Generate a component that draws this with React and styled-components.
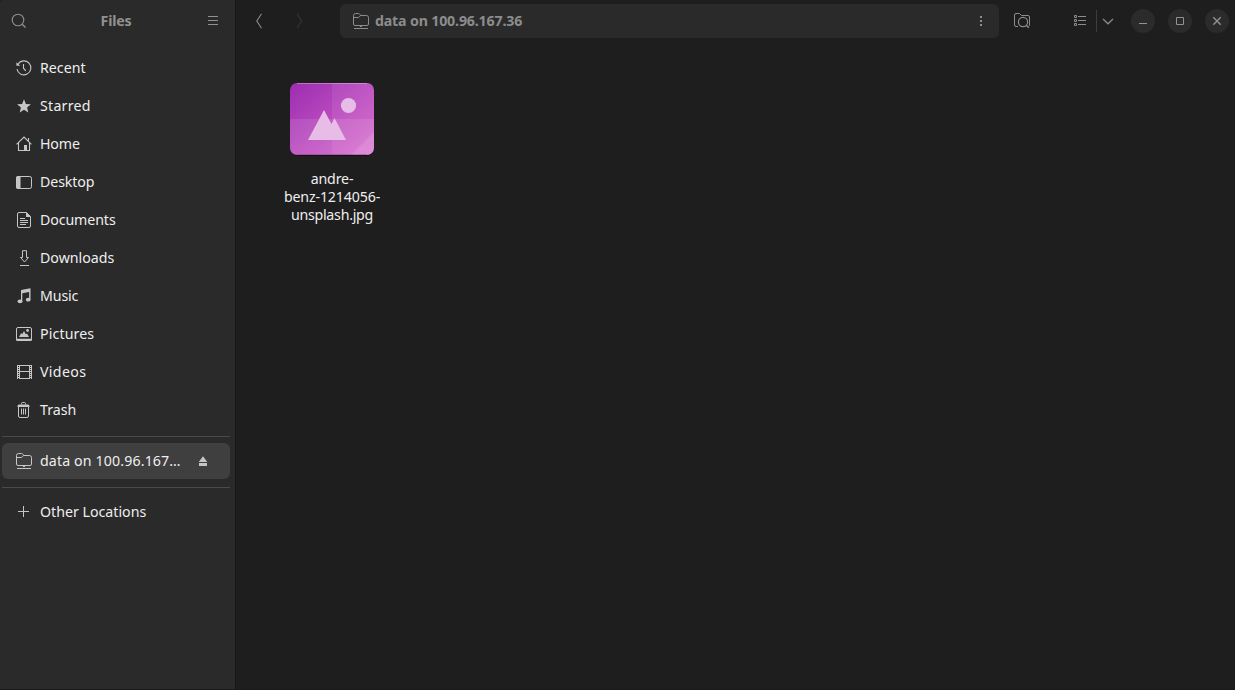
import React from "react";
import styled, { createGlobalStyle } from "styled-components";

const Global = createGlobalStyle`
  * { box-sizing: border-box; }
  body { margin: 0; background: #1e1e1e; overflow: hidden; }
`;

const Window = styled.div`
  display: flex;
  width: 1235px;
  height: 690px;
  background: #1e1e1e;
  border-bottom: 1px solid #1f181a;
  border-top-left-radius: 3px;
  font-family: "Noto Sans", "Open Sans", sans-serif;
  font-size: 14.2px;
  line-height: 18px;
  color: #eeeeee;
`;

const Sidebar = styled.aside`
  width: 236px;
  flex: none;
  background: #2a2a2a;
  border-right: 1px solid #191919;
  border-top-left-radius: 3px;
`;

const SidebarHeader = styled.header`
  display: flex;
  align-items: center;
  justify-content: space-between;
  height: 42px;
  padding: 0 14px 0 11px;
  color: #919191;
`;

const Title = styled.h1`
  margin: 0;
  font-size: 14.2px;
  font-weight: 700;
  line-height: 18px;
  letter-spacing: ${(p) => p.$spacing || 0}px;
  white-space: nowrap;
`;

const Places = styled.nav`
  display: flex;
  flex-direction: column;
  gap: 2px;
  padding: 8px 5px 0 2px;
`;

const PlaceRow = styled.div`
  display: flex;
  align-items: center;
  gap: 8px;
  height: 36px;
  padding: 0 19px 0 14px;
  border-radius: 6px;
  background: ${(p) => (p.$active ? "#3f3f3f" : "transparent")};
`;

const Label = styled.span`
  flex: 1;
  white-space: nowrap;
  letter-spacing: ${(p) => p.$spacing}px;
`;

const Divider = styled.hr`
  width: 100%;
  height: 1px;
  margin: ${(p) => p.$margin};
  border: 0;
  background: #4b4b4b;
`;

const Glyph = styled.svg`
  display: block;
  flex: none;
  color: ${(p) => p.$color || "inherit"};
  overflow: visible;
`;

const Main = styled.main`
  flex: 1;
  min-width: 0;
`;

const Toolbar = styled.header`
  display: flex;
  align-items: center;
  height: 42px;
  padding: 0 6px 0 14px;
  color: #8c8c8c;
`;

const NavButtons = styled.div`
  display: flex;
  gap: 24px;
  width: 90px;
`;

const PathBar = styled.div`
  display: flex;
  align-items: center;
  gap: 6px;
  width: 659px;
  height: 34px;
  padding: 0 10px 0 13px;
  border-radius: 6px;
  background: #2a2a2a;
`;

const PathText = styled.span`
  flex: 1;
  font-weight: 700;
  letter-spacing: ${(p) => p.$spacing}px;
`;

const SearchSlot = styled.div`
  margin-left: 15px;
`;

const ViewSwitch = styled.div`
  display: flex;
  align-items: center;
  margin-left: 42px;
`;

const Separator = styled.span`
  width: 1px;
  height: 22px;
  margin: 0 3px 0 8px;
  background: #3d3d3d;
`;

const WindowControls = styled.div`
  display: flex;
  gap: 13px;
  margin-left: auto;
`;

const ControlButton = styled.button`
  display: grid;
  place-items: center;
  width: 24px;
  height: 24px;
  padding: 0;
  border: 0;
  border-radius: 50%;
  background: #2b2b2b;
  color: #919191;
`;

const Canvas = styled.section`
  padding: 41px 0 0 32px;
`;

const FileItem = styled.figure`
  display: flex;
  flex-direction: column;
  align-items: center;
  width: 128px;
  margin: 0;
`;

const FileName = styled.figcaption`
  display: flex;
  flex-direction: column;
  align-items: center;
  margin-top: 15px;
`;

const NameLine = styled.span`
  letter-spacing: ${(p) => p.$spacing}px;
  white-space: nowrap;
`;

const Icon = ({ size = 16, color, children }) => (
  <Glyph width={size} height={size} viewBox={`0 0 ${size} ${size}`} fill="none" stroke="currentColor" strokeWidth="1" $color={color}>
    {children}
  </Glyph>
);

const solid = { fill: "currentColor", stroke: "none" };

const NetworkFolder = () => (
  <>
    <path d="M.5 11V2.5Q.5.5 2.5.5h3q1 0 1.5 1l.5 1h6q2 0 2 2V11q0 1.5-1.5 1.5H2Q.5 12.5.5 11zM.5 4.5h4.7q.8 0 1.2-.7l1-1.3" />
    <path d="M1 15.5h14M7 13.5h2" />
  </>
);

const icons = {
  recent: (
    <>
      <path d="M1.9 4.2A7 7 0 1 1 1 9.2M7.5 4v4.2l2.3 2.6" strokeWidth="1.1" />
      <path d="M.4 2.2v3.6h3.8z" {...solid} />
    </>
  ),
  star: <path d="m8 1.3 1.9 4.6 5 .4-3.8 3.2 1.2 4.9L8 11.8l-4.3 2.6 1.2-4.9L1.1 6.3l5-.4z" {...solid} />,
  home: (
    <>
      <path d="M.6 8.4 8 1l7.4 7.4M2.5 7v7.5h11V7M12.5 2v3" strokeWidth="1.1" />
      <path d="M8 9h3v5H8z" {...solid} />
    </>
  ),
  desktop: (
    <>
      <rect x=".5" y="2.5" width="15" height="12" rx="1.7" />
      <path d="M2 2h2.5v13H2Q0 15 0 13V4q0-2 2-2z" {...solid} />
    </>
  ),
  documents: (
    <>
      <path d="M3 .5h7.5l4 4V14q0 1.5-1.5 1.5H3Q1.5 15.5 1.5 14V2Q1.5.5 3 .5z" />
      <path d="M10 0v5h5z" {...solid} />
      <path d="M4 6.5h5M4 8.5h8M4 10.5h8M4 12.5h6" />
    </>
  ),
  downloads: <path d="M6.5.7h4v6.8h2L8.5 12l-4-4.5h2zM4 15.5h9" />,
  music: (
    <>
      <path d="M5 2.1 14.5.3v11.2h-1.4V4L6.3 5.2v8.3H5z" {...solid} />
      <ellipse cx="4" cy="13.3" rx="2.4" ry="1.9" {...solid} />
      <ellipse cx="12.2" cy="11.7" rx="2.4" ry="1.9" {...solid} />
    </>
  ),
  pictures: (
    <>
      <rect x=".5" y="1.5" width="15" height="13" rx="1.5" />
      <path d="M0 12.7h16v.8q0 1.5-1.5 1.5h-13Q0 15 0 13.5zM3 11l2.2-4 1 1.3L8 5l1.8 3.3L11 7.5l2 3.5z" {...solid} />
      <circle cx="11.6" cy="4.5" r="1.4" {...solid} />
    </>
  ),
  videos: (
    <>
      <path d="M1.5 1v14M15.5 1v14" />
      <path d="M2.5 1v14M14.5 1v14" strokeDasharray="1 1" />
      <path d="M3.5 1v14M13.5 1v14M3 1.5h11M4 7.5h9M3 14.5h11" />
    </>
  ),
  trash: (
    <>
      <path d="M1.5 5V4Q1.5 2.5 3 2.5h9q1.5 0 1.5 1.5v1z" {...solid} />
      <path d="M5.5 2.5v-1q0-1 1-1h2q1 0 1 1v1" />
      <path d="M2.5 5v9q0 1.5 1.5 1.5h7q1.5 0 1.5-1.5V5M5.5 6.5v6M7.5 6.5v6M9.5 6.5v6" />
    </>
  ),
  network: <NetworkFolder />,
  plus: <path d="M2 7.5h11M7.5 2v11" />,
};

const places = [
  ["recent", "Recent", 0],
  ["star", "Starred", 0.25],
  ["home", "Home", -0.15],
  ["desktop", "Desktop", -0.1],
  ["documents", "Documents", -0.1],
  ["downloads", "Downloads", 0],
  ["music", "Music", -0.12],
  ["pictures", "Pictures", 0.12],
  ["videos", "Videos", 0.35],
  ["trash", "Trash", 0],
];

const Place = ({ icon, label, spacing, active, children }) => (
  <PlaceRow $active={active}>
    <Icon color="#c6c6c6">{icons[icon]}</Icon>
    <Label $spacing={spacing}>{label}</Label>
    {children}
  </PlaceRow>
);

const ImageThumbnail = () => (
  <Glyph width="84" height="72" viewBox="0 0 84 72">
    <defs>
      <linearGradient id="thumb" x1="0" y1="0" x2="1" y2="1">
        <stop offset="0" stopColor="#9c2db1" />
        <stop offset="1" stopColor="#d868cc" />
      </linearGradient>
      <clipPath id="card">
        <rect width="84" height="72" rx="7" />
      </clipPath>
    </defs>
    <rect y="1" width="84" height="72" rx="7" fill="#111" />
    <g clipPath="url(#card)">
      <rect width="84" height="72" fill="url(#thumb)" />
      <path d="M42 0h42v72H42z" fill="#fff" opacity=".07" />
      <path d="M0 36h84v36H0z" fill="#fff" opacity=".1" />
      <path d="M84 49v23H61z" fill="#fff" opacity=".11" />
      <path d="M7 .5h70" stroke="#fff" opacity=".3" />
      <path d="M7 71.5h70" stroke="#7e2f84" opacity=".4" />
    </g>
    <path d="M18 57 34 27l7.5 14 3-6L56 57z" fill="#e7bce6" />
    <circle cx="58.5" cy="22.5" r="7.6" fill="#e7bce6" />
  </Glyph>
);

export default function App() {
  return (
    <>
      <Global />
      <Window>
        <Sidebar>
          <SidebarHeader>
            <Icon>
              <circle cx="7" cy="7" r="5.8" strokeWidth="1.1" />
              <path d="m11.2 11.2 3.3 3.3" strokeWidth="1.3" />
            </Icon>
            <Title $spacing={-0.2}>Files</Title>
            <Icon><path d="M3 3.5h10M3 7.5h10M3 11.5h10" /></Icon>
          </SidebarHeader>
          <Places>
            {places.map(([icon, label, spacing]) => (
              <Place key={icon} icon={icon} label={label} spacing={spacing} />
            ))}
            <Divider $margin="6px 0 4px" />
            <Place icon="network" label="data on 100.96.167…" spacing={0.13} active>
              <Icon color="#c6c6c6">
                <path d="m8 3.2 4.3 5.8H3.7zM4 10h8v3H4z" {...solid} />
              </Icon>
            </Place>
            <Divider $margin="6px 0 4px" />
            <Place icon="plus" label="Other Locations" spacing={0} />
          </Places>
        </Sidebar>
        <Main>
          <Toolbar>
            <NavButtons>
              <Icon><path d="M11.5.8 6.8 8l4.7 7.2" strokeWidth="1.1" /></Icon>
              <Icon color="#363636"><path d="m7 .8 4.7 7.2L7 15.2" strokeWidth="1.1" /></Icon>
            </NavButtons>
            <PathBar>
              <Icon><NetworkFolder /></Icon>
              <PathText $spacing={-0.17}>data on 100.96.167.36</PathText>
              <Icon><path d="M7 3h2v2H7zM7 7h2v2H7zM7 11h2v2H7z" {...solid} /></Icon>
            </PathBar>
            <SearchSlot>
              <Icon>
                <path d="M4 13.5H2Q.5 13.5.5 12V2Q.5.5 2 .5h3.5L7.5 2.5H14q1.5 0 1.5 1.5v8q0 1-.5 1.3" />
                <circle cx="9" cy="9" r="4.6" strokeWidth="1.2" />
                <path d="m12.2 12.2 2.6 2.6" strokeWidth="1.4" />
              </Icon>
            </SearchSlot>
            <ViewSwitch>
              <Icon><path d="M2.5 2.5h2v2h-2zM2.5 6.5h2v2h-2zM2.5 10.5h2v2h-2zM6 3.5h8M6 7.5h8M6 11.5h8" /></Icon>
              <Separator />
              <Icon><path d="m3 6 5 4.8L13 6" strokeWidth="1.2" /></Icon>
            </ViewSwitch>
            <WindowControls>
              <ControlButton aria-label="Minimize"><Icon><path d="M4 10.5h8" /></Icon></ControlButton>
              <ControlButton aria-label="Maximize"><Icon><path d="M4.5 4.5h7v7h-7z" /></Icon></ControlButton>
              <ControlButton aria-label="Close"><Icon><path d="m4.3 4.3 7.4 7.4M11.7 4.3l-7.4 7.4" strokeWidth="1.4" /></Icon></ControlButton>
            </WindowControls>
          </Toolbar>
          <Canvas>
            <FileItem>
              <ImageThumbnail />
              <FileName>
                <NameLine $spacing={-0.15}>andre-</NameLine>
                <NameLine $spacing={-0.15}>benz-1214056-</NameLine>
                <NameLine $spacing={-0.25}>unsplash.jpg</NameLine>
              </FileName>
            </FileItem>
          </Canvas>
        </Main>
      </Window>
    </>
  );
}
